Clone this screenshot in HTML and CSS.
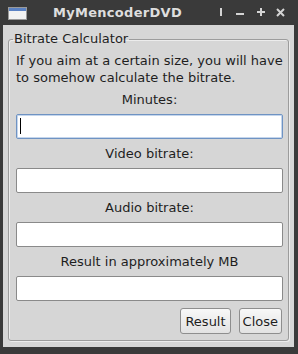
FILE: index.html
```html
<!DOCTYPE html>
<html lang="en">
<head>
    <meta charset="UTF-8">
    <meta name="viewport" content="width=device-width, initial-scale=1.0">
    <link rel="stylesheet" href="styles.css">
    <title>MyMencoderDVD</title>
</head>
<body>
    <div class="window">
        <div class="titlebar">
            <svg class="app-icon" width="19" height="13" viewBox="0 0 19 13">
                <rect x="0.5" y="0.5" width="18" height="12" fill="#f2f2f2" stroke="#9a9a9a"/>
                <rect x="1" y="1" width="17" height="3" fill="#5b82c4"/>
            </svg>
            <div class="title">MyMencoderDVD</div>
            <div class="controls">
                <svg width="3" height="9" viewBox="0 0 3 9"><rect x="0" y="0" width="2" height="8" fill="#d4d4d4"/></svg>
                <svg width="8" height="9" viewBox="0 0 8 9"><rect x="0" y="5" width="8" height="2" fill="#d4d4d4"/></svg>
                <svg width="8" height="9" viewBox="0 0 8 9"><rect x="0" y="3" width="8" height="2" fill="#d4d4d4"/><rect x="3" y="0" width="2" height="8" fill="#d4d4d4"/></svg>
                <svg width="9" height="9" viewBox="0 0 9 9"><path d="M1 1 L8 8 M8 1 L1 8" stroke="#d4d4d4" stroke-width="2"/></svg>
            </div>
        </div>

        <div class="client">
            <fieldset class="group">
                <legend>Bitrate Calculator</legend>
                <p class="intro">If you aim at a certain size, you will have to somehow calculate the bitrate.</p>

                <label for="minutes">Minutes:</label>
                <div class="input-wrap">
                    <input type="text" id="minutes" class="focused">
                    <span class="caret"></span>
                </div>

                <label for="video">Video bitrate:</label>
                <input type="text" id="video">

                <label for="audio">Audio bitrate:</label>
                <input type="text" id="audio">

                <label for="result">Result in approximately MB</label>
                <input type="text" id="result">

                <div class="buttons">
                    <button type="button">Result</button>
                    <button type="button">Close</button>
                </div>
            </fieldset>
        </div>
    </div>
</body>
</html>
```

FILE: styles.css
```css
*{
    box-sizing: border-box;
}
html, body{
    margin: 0;
    height: 100%;
}
body{
    background-color: #353535;
    font-family: "DejaVu Sans", sans-serif;
    font-size: 13px;
    color: #1e1e1e;
}
.window{
    width: 298px;
    height: 354px;
    background-color: #3a3a3a;
}
.titlebar{
    height: 25px;
    display: flex;
    align-items: center;
    padding: 0 0 0 8px;
}
.app-icon{
    display: block;
    margin-top: 1px;
}
.title{
    flex: 1;
    text-align: center;
    color: #dedede;
    font-weight: bold;
    font-size: 13px;
    letter-spacing: 0.3px;
    padding-right: 12px;
}
.controls{
    display: flex;
    align-items: center;
    gap: 0;
    margin-right: 13px;
}
.controls svg{
    display: block;
}
.controls svg:nth-child(2){
    margin-left: 13px;
}
.controls svg:nth-child(3){
    margin-left: 13px;
}
.controls svg:nth-child(4){
    margin-left: 11px;
}
.client{
    margin: 0 4px 0 3px;
    height: 322px;
    background-color: #d6d6d6;
    padding: 6px 5px 0 5px;
}
.group{
    margin: 0;
    height: 310px;
    border: 1px solid #9c9c9c;
    border-radius: 3px;
    box-shadow: inset 1px 1px 0 #ececec, 1px 1px 0 #ececec;
    padding: 5px 5px 5px 7px;
    display: flex;
    flex-direction: column;
}
.group legend{
    margin-left: -3px;
    padding: 0 1px;
    line-height: 16px;
}
.intro{
    margin: 0 0 5px;
    line-height: 17px;
}
label{
    display: block;
    text-align: center;
    line-height: 17px;
    margin-bottom: 6px;
}
input{
    display: block;
    width: 100%;
    height: 25px;
    margin: 0 0 6px;
    border: 1px solid #8a8a8a;
    border-radius: 2px;
    background-color: #fff;
    font-family: inherit;
    font-size: 13px;
    outline: none;
}
input.focused{
    border-color: #6f93c3;
    box-shadow: inset 0 0 0 1px #c5d6ec;
}
.input-wrap{
    position: relative;
}
.caret{
    position: absolute;
    left: 4px;
    top: 4px;
    width: 1px;
    height: 16px;
    background-color: #000;
}
.buttons{
    display: flex;
    justify-content: flex-end;
    gap: 8px;
    margin-top: 1px;
    padding-right: 1px;
}
button{
    height: 26px;
    padding: 0 4px;
    border: 1px solid #8e8e8e;
    border-radius: 3px;
    background: linear-gradient(#f8f8f8, #e2e2e2);
    font-family: inherit;
    font-size: 13px;
    color: #1e1e1e;
}
button:last-child{
    padding: 0 3px;
}
```
